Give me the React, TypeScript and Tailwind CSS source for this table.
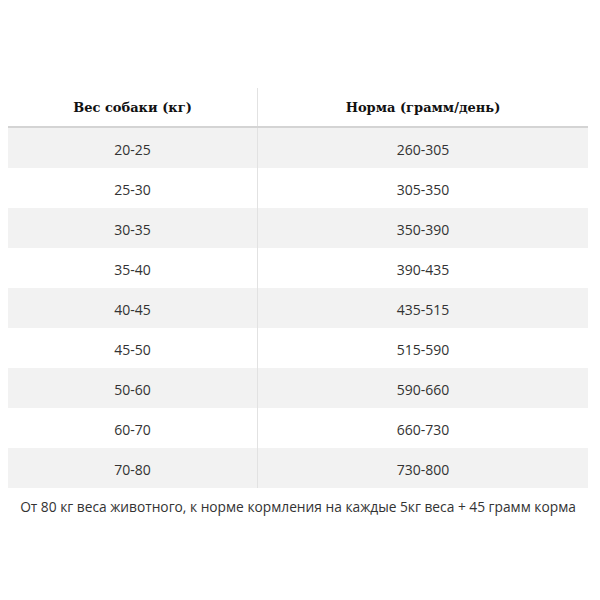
import React from "react";

const rows: [string, string][] = [
  ["20-25", "260-305"],
  ["25-30", "305-350"],
  ["30-35", "350-390"],
  ["35-40", "390-435"],
  ["40-45", "435-515"],
  ["45-50", "515-590"],
  ["50-60", "590-660"],
  ["60-70", "660-730"],
  ["70-80", "730-800"],
];

export default function App() {
  return (
    <div className="w-[600px] h-[600px] bg-white pt-[88px]" style={{ fontFamily: '"Open Sans", sans-serif' }}>
      <div className="ml-[8px] w-[580px]">
        <div className="flex h-[40px] border-b-[2px] border-[#d4d4d4]">
          <div
            className="w-[250px] border-r border-[#e2e2e2] flex items-center justify-center text-[13px] font-bold text-[#111] pt-[2px]"
            style={{ fontFamily: '"DejaVu Serif", serif' }}
          >
            Вес собаки (кг)
          </div>
          <div
            className="flex-1 flex items-center justify-center text-[13px] font-bold text-[#111] pt-[2px]"
            style={{ fontFamily: '"DejaVu Serif", serif' }}
          >
            Норма (грамм/день)
          </div>
        </div>
        {rows.map(([a, b], i) => (
          <div key={a} className={`flex h-[40px] ${i % 2 === 0 ? "bg-[#f2f2f2]" : "bg-white"}`}>
            <div className="w-[250px] border-r border-[#e2e2e2] flex items-center justify-center text-[14px] text-[#333] pt-[2px]">
              {a}
            </div>
            <div className="flex-1 flex items-center justify-center text-[14px] text-[#333] pt-[2px]">{b}</div>
          </div>
        ))}
      </div>
      <div className="mt-[9px] pr-[4px] text-center text-[13.75px] text-[#333] leading-[20px]">
        От 80 кг веса животного, к норме кормления на каждые 5кг веса + 45 грамм корма
      </div>
    </div>
  );
}
